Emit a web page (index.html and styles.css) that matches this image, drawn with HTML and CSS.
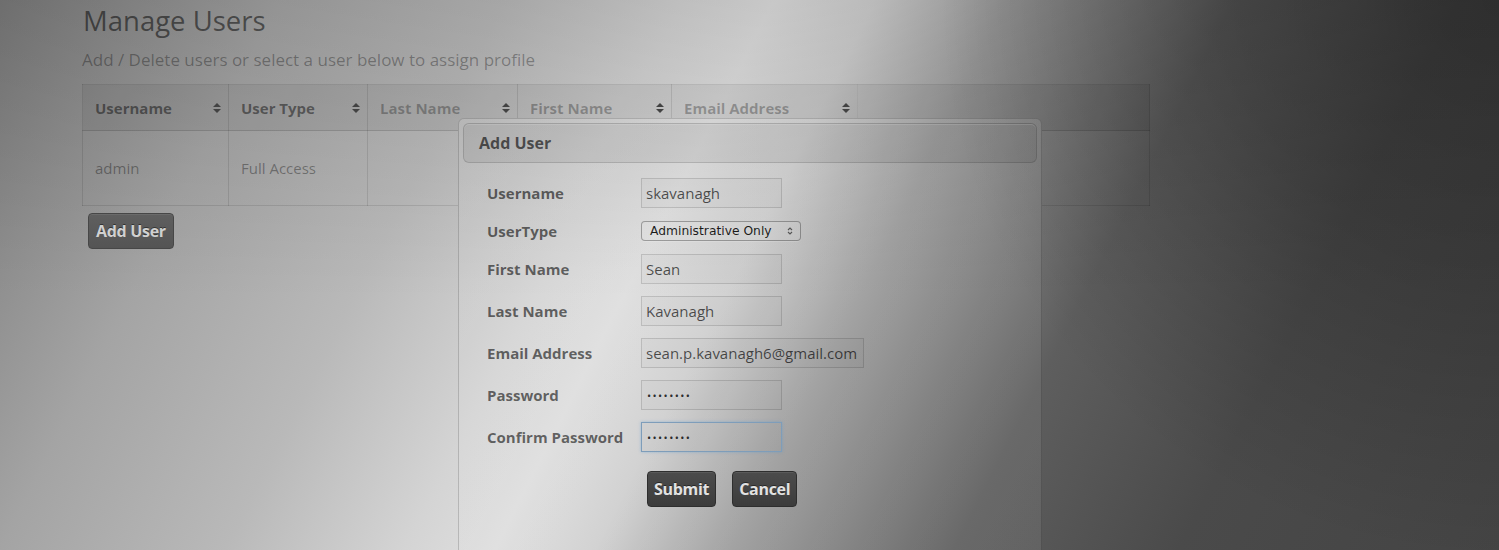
FILE: index.html
```html
<!DOCTYPE html>
<html lang="en">
<head>
<meta charset="utf-8">
<title>Manage Users</title>
<link rel="stylesheet" href="styles.css">
</head>
<body>
<div class="page">
  <h1 class="title">Manage Users</h1>
  <p class="subtitle">Add / Delete users or select a user below to assign profile</p>
  <table class="users">
    <colgroup>
      <col class="c1"><col class="c2"><col class="c3"><col class="c4"><col class="c5"><col>
    </colgroup>
    <thead>
      <tr>
        <th><div class="th"><span>Username</span><svg class="sort" viewBox="0 0 8 12"><polygon points="0,5 4,1 8,5"/><polygon points="0,7 4,11 8,7"/></svg></div></th>
        <th><div class="th"><span>User Type</span><svg class="sort" viewBox="0 0 8 12"><polygon points="0,5 4,1 8,5"/><polygon points="0,7 4,11 8,7"/></svg></div></th>
        <th class="muted"><div class="th"><span>Last Name</span><svg class="sort" viewBox="0 0 8 12"><polygon points="0,5 4,1 8,5"/><polygon points="0,7 4,11 8,7"/></svg></div></th>
        <th class="muted"><div class="th"><span>First Name</span><svg class="sort" viewBox="0 0 8 12"><polygon points="0,5 4,1 8,5"/><polygon points="0,7 4,11 8,7"/></svg></div></th>
        <th class="muted last"><div class="th"><span>Email Address</span><svg class="sort" viewBox="0 0 8 12"><polygon points="0,5 4,1 8,5"/><polygon points="0,7 4,11 8,7"/></svg></div></th>
        <th class="blank"></th>
      </tr>
    </thead>
    <tbody>
      <tr>
        <td>admin</td>
        <td>Full Access</td>
        <td></td>
        <td></td>
        <td></td>
        <td></td>
      </tr>
    </tbody>
  </table>
  <button class="btn btn-page" type="button">Add User</button>
</div>

<div class="modal">
  <div class="modal-head">Add User</div>
  <form class="form">
    <div class="grid">
      <label class="lbl">Username</label>
      <input class="field" type="text" value="skavanagh">

      <label class="lbl">UserType</label>
      <div class="select-row">
        <div class="select">
          <span class="select-text">Administrative Only</span>
          <svg class="select-arrows" viewBox="0 0 6 10"><polyline points="1,4 3,2 5,4"/><polyline points="1,6 3,8 5,6"/></svg>
        </div>
      </div>

      <label class="lbl">First Name</label>
      <input class="field" type="text" value="Sean">

      <label class="lbl">Last Name</label>
      <input class="field" type="text" value="Kavanagh">

      <label class="lbl">Email Address</label>
      <input class="field field-wide" type="text" value="sean.p.kavanagh6@gmail.com">

      <label class="lbl">Password</label>
      <input class="field pw" type="password" value="password">

      <label class="lbl">Confirm Password</label>
      <input class="field pw focus" type="password" value="password">
    </div>
    <div class="actions">
      <button class="btn btn-modal" type="button">Submit</button>
      <button class="btn btn-modal" type="button">Cancel</button>
    </div>
  </form>
</div>
</body>
</html>
```

FILE: styles.css
```css
:root {
  --scene:
    radial-gradient(circle at 1499px 0, rgba(0,0,0,.3) 0, rgba(0,0,0,.2) 260px, rgba(0,0,0,0) 560px),
    linear-gradient(to bottom, rgba(0,0,0,.1) 0, rgba(0,0,0,0) 300px),
    linear-gradient(117deg, #7a7a7a 0px, #a4a4a4 250px, #b9b9b9 450px, #d4d4d4 610px, #dedede 690px, #cfcfcf 780px, #9c9c9c 900px, #5e5e5e 1100px, #4a4a4a 1300px, #444444 1586px);
}

html, body {
  height: 100%;
}

body {
  margin: 0;
  overflow: hidden;
  font-family: "Open Sans", "DejaVu Sans", sans-serif;
  background: var(--scene);
  background-attachment: fixed;
  background-color: #777;
}

.page {
  padding-left: 82px;
}

.title {
  margin: 1px 0 0 1px;
  font-size: 27.5px;
  font-weight: 400;
  line-height: 40px;
  color: rgba(0,0,0,.52);
}

.subtitle {
  margin: 8px 0 0 0;
  font-size: 17px;
  line-height: 22px;
  color: rgba(0,0,0,.33);
}

.users {
  margin-top: 13px;
  width: 1068px;
  border-collapse: collapse;
  table-layout: fixed;
  border: 1px solid rgba(0,0,0,.1);
}

.c1 { width: 146px; }
.c2 { width: 139px; }
.c3 { width: 150px; }
.c4 { width: 154px; }
.c5 { width: 186px; }

.users th {
  height: 45px;
  padding: 0 7px 0 12px;
  background: rgba(0,0,0,.05);
  border: 1px solid rgba(0,0,0,.1);
  border-bottom-color: rgba(0,0,0,.12);
  text-align: left;
  font-size: 15px;
  font-weight: 700;
  color: rgba(0,0,0,.46);
}

.users th.muted {
  color: rgba(0,0,0,.28);
}

.users th.last {
  border-right-color: rgba(0,0,0,.04);
}

.th {
  display: flex;
  align-items: center;
  justify-content: space-between;
}

.sort {
  width: 8px;
  height: 12px;
  fill: #424242;
  flex: none;
}

.users td {
  height: 74px;
  padding: 0 12px;
  border: 1px solid rgba(0,0,0,.1);
  font-size: 15px;
  color: rgba(0,0,0,.36);
}

.btn {
  font-family: "Open Sans", "DejaVu Sans", sans-serif;
  font-size: 16px;
  font-weight: 700;
  height: 36px;
  padding: 0 6px;
  border-radius: 4px;
  cursor: pointer;
  white-space: nowrap;
  letter-spacing: -0.3px;
  text-shadow: 0 -1px 0 rgba(0,0,0,.45);
}

.btn-page {
  margin: 7px 0 0 6px;
  padding: 0 7px;
  background: linear-gradient(#5f5f5f, #545454);
  border: 1px solid #474747;
  color: #d0d0d0;
  box-shadow: inset 0 1px 0 rgba(255,255,255,.08);
}

.btn-modal {
  background: linear-gradient(#4c4c4c, #3c3c3c);
  border: 1px solid #2e2e2e;
  color: #e2e2e2;
  box-shadow: inset 0 1px 0 rgba(255,255,255,.08);
}

.modal {
  position: absolute;
  left: 458px;
  top: 118px;
  width: 574px;
  height: 440px;
  padding: 4px;
  border: 1px solid rgba(0,0,0,.16);
  border-bottom: 0;
  border-radius: 6px 6px 0 0;
  background: linear-gradient(rgba(255,255,255,.07), rgba(255,255,255,.07)), var(--scene);
  background-attachment: fixed;
  background-color: #999;
}

.modal-head {
  height: 38px;
  padding-left: 15px;
  display: flex;
  align-items: center;
  border: 1px solid rgba(0,0,0,.13);
  border-radius: 6px;
  background: rgba(0,0,0,.06);
  box-shadow: inset 0 1px 0 rgba(255,255,255,.12);
  font-size: 16px;
  font-weight: 700;
  color: rgba(0,0,0,.6);
}

.form {
  padding: 15px 0 0 24px;
  margin: 0;
}

.grid {
  display: grid;
  grid-template-columns: 154px auto;
  row-gap: 12px;
  align-items: center;
  justify-items: start;
}

.lbl {
  font-size: 15px;
  font-weight: 700;
  color: rgba(0,0,0,.58);
}

.field {
  box-sizing: border-box;
  width: 141px;
  height: 30px;
  margin: 0;
  padding: 0 4px;
  border: 1px solid rgba(0,0,0,.13);
  border-radius: 0;
  background: rgba(0,0,0,.015);
  font-family: "Open Sans", "DejaVu Sans", sans-serif;
  font-size: 15px;
  color: rgba(0,0,0,.66);
  outline: none;
}

.field-wide {
  width: 223px;
}

.field.pw {
  font-size: 11px;
  letter-spacing: 1.4px;
  padding-left: 5px;
  color: rgba(0,0,0,.8);
}

.field.focus {
  border-color: #7e9dba;
  box-shadow: 0 0 3px rgba(82,150,210,.45);
}

.select-row {
  height: 22px;
  display: flex;
  align-items: center;
}

.select {
  box-sizing: border-box;
  width: 160px;
  height: 20px;
  display: flex;
  align-items: center;
  justify-content: space-between;
  padding: 0 7px 0 8px;
  border: 1px solid rgba(0,0,0,.3);
  border-radius: 4px;
  background: rgba(255,255,255,.06);
  box-shadow: 0 1px 0 rgba(255,255,255,.15);
}

.select-text {
  font-family: "DejaVu Sans", sans-serif;
  font-size: 12.3px;
  color: rgba(0,0,0,.88);
}

.select-arrows {
  width: 6px;
  height: 10px;
  fill: none;
  stroke: #555;
  stroke-width: 1.1;
}

.actions {
  display: flex;
  gap: 16px;
  margin-top: 19px;
  padding-left: 160px;
}
```
